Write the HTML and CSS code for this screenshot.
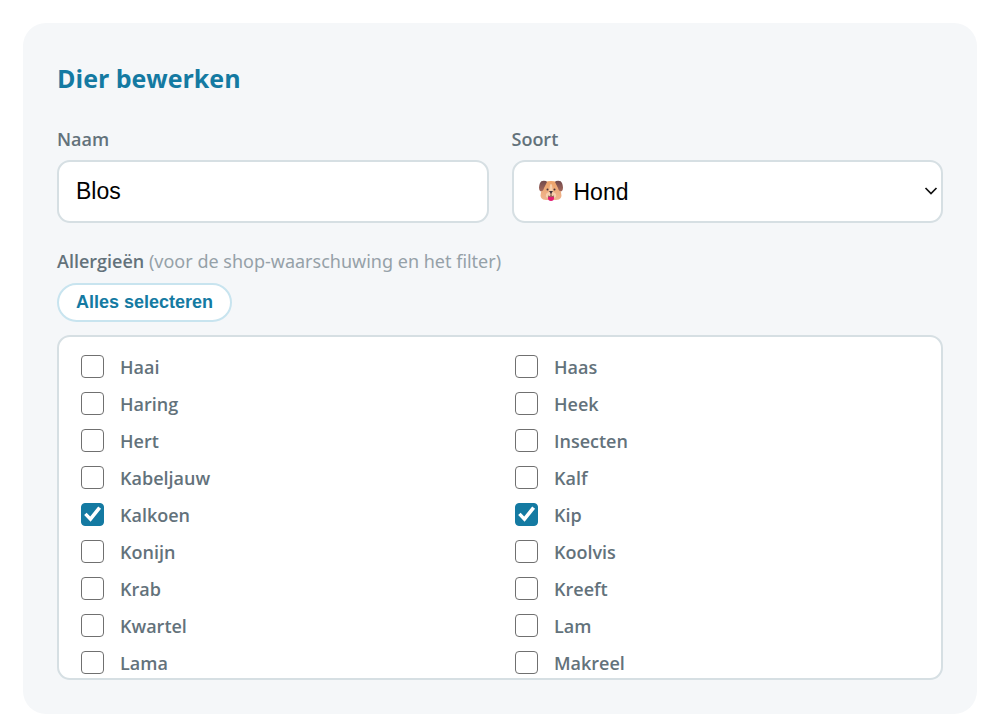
FILE: index.html
```html
<!DOCTYPE html>
<html lang="nl">
<head>
<meta charset="utf-8">
<meta name="viewport" content="width=device-width, initial-scale=1">
<title>Dier bewerken</title>
<link rel="stylesheet" href="styles.css">
</head>
<body>
<form class="card">
  <h1 class="title">Dier bewerken</h1>
  <div class="fields">
    <div class="field">
      <label class="label" for="naam">Naam</label>
      <input class="control" id="naam" type="text" value="Blos">
    </div>
    <div class="field">
      <label class="label" for="soort">Soort</label>
      <div class="select-wrap">
        <select class="control select" id="soort"><option>Hond</option></select>
        <svg class="dog" viewBox="0 0 24 24" aria-hidden="true">
          <defs>
            <linearGradient id="ear" x1="0" y1="0" x2="0" y2="1"><stop offset="0" stop-color="#70494c"/><stop offset="1" stop-color="#a4685c"/></linearGradient>
            <linearGradient id="face" x1="0" y1="0" x2="0" y2="1"><stop offset="0" stop-color="#eda268"/><stop offset="1" stop-color="#efb590"/></linearGradient>
          </defs>
          <path d="M6 2Q12 0 18 2L22 12Q24 20 17 20H7Q0 20 2 12Z" fill="url(#face)"/>
          <path d="M7 1Q2 0 1 3Q-1 8 1 11Q4 12 5 8L8 2Z" fill="url(#ear)"/>
          <path d="M17 1Q22 0 23 3Q25 8 23 11Q20 12 19 8L16 2Z" fill="url(#ear)"/>
          <path d="M11 5Q12 3 13 5L14 12Q18 13 17 17Q12 20 7 17Q6 13 10 12Z" fill="#f7cfac"/>
          <path d="M9 17Q12 16 15 17V18Q15 21 12 21Q9 21 9 18Z" fill="#e21b73"/>
          <path d="M9 16Q10 17 12 16Q14 17 15 16M12 13V16" fill="none" stroke="#7b4b42"/>
          <path d="M10 11H14L12 14Z" fill="#3f3038"/>
          <circle cx="8.500" cy="9.500" r="1" fill="#473239"/>
          <circle cx="15.500" cy="9.500" r="1" fill="#473239"/>
        </svg>
        <svg class="chevron" viewBox="0 0 14 10" aria-hidden="true"><path d="M1.500 2L7 7.500L12.500 2" fill="none" stroke="#111" stroke-width="1.700"/></svg>
      </div>
    </div>
  </div>
  <fieldset class="allergies">
    <legend class="label">Allergieën <span class="hint">(voor de shop-waarschuwing en het filter)</span></legend>
    <button class="pill" type="button">Alles selecteren</button>
    <div class="list">
      <label class="item"><input class="check" type="checkbox">Haai</label>
      <label class="item"><input class="check" type="checkbox">Haas</label>
      <label class="item"><input class="check" type="checkbox">Haring</label>
      <label class="item"><input class="check" type="checkbox">Heek</label>
      <label class="item"><input class="check" type="checkbox">Hert</label>
      <label class="item"><input class="check" type="checkbox">Insecten</label>
      <label class="item"><input class="check" type="checkbox">Kabeljauw</label>
      <label class="item"><input class="check" type="checkbox">Kalf</label>
      <label class="item"><input class="check" type="checkbox" checked>Kalkoen</label>
      <label class="item"><input class="check" type="checkbox" checked>Kip</label>
      <label class="item"><input class="check" type="checkbox">Konijn</label>
      <label class="item"><input class="check" type="checkbox">Koolvis</label>
      <label class="item"><input class="check" type="checkbox">Krab</label>
      <label class="item"><input class="check" type="checkbox">Kreeft</label>
      <label class="item"><input class="check" type="checkbox">Kwartel</label>
      <label class="item"><input class="check" type="checkbox">Lam</label>
      <label class="item"><input class="check" type="checkbox">Lama</label>
      <label class="item"><input class="check" type="checkbox">Makreel</label>
    </div>
  </fieldset>
</form>
</body>
</html>
```
FILE: styles.css
```css
* {
  box-sizing: border-box;
}

body {
  margin: 0;
  background: #fff;
  color: #63727b;
  font-family: "Segoe UI", "Open Sans", "Noto Sans", sans-serif;
  font-size: 18px;
}

.card {
  margin: 23px 23px 7px;
  padding: 34px;
  border-radius: 23px;
  background: #f5f7f9;
}

.title {
  margin: 0 0 27px;
  color: #147aa2;
  font-size: 25px;
  font-weight: 700;
  line-height: 42px;
}

.fields {
  display: grid;
  grid-template-columns: 1fr 1fr;
  gap: 23px;
  margin-bottom: 25px;
}

.label {
  display: block;
  padding: 0;
  font-weight: 600;
  line-height: 26px;
}

.field .label {
  margin-bottom: 8px;
}

.control {
  display: block;
  width: 100%;
  height: 63px;
  padding: 0 17px;
  border: 2px solid #d6dfe3;
  border-radius: 13px;
  background: #fff;
  color: #000;
  font-family: "Liberation Sans", Arial, sans-serif;
  font-size: 23px;
}

.select-wrap {
  position: relative;
}

.select {
  appearance: none;
  padding-left: 60px;
}

.dog {
  position: absolute;
  top: 20px;
  left: 27px;
  width: 24px;
  height: 24px;
  pointer-events: none;
}

.chevron {
  position: absolute;
  top: 26px;
  right: 5px;
  width: 14px;
  height: 10px;
  pointer-events: none;
}

.allergies {
  min-width: 0;
  margin: 0;
  padding: 0;
  border: 0;
}

.hint {
  color: #95a1a8;
  font-family: "Segoe UI", "Noto Sans", sans-serif;
  font-weight: 400;
}

.pill {
  display: block;
  height: 39px;
  margin: 9px 0 13px;
  padding: 0 17px;
  border: 2px solid #c8e4ef;
  border-radius: 20px;
  background: #fff;
  color: #147aa2;
  font-family: "Liberation Sans", Arial, sans-serif;
  font-size: 18px;
  font-weight: 700;
}

.list {
  display: grid;
  grid-template-columns: 1fr 1fr;
  gap: 0 30px;
  max-height: 345px;
  padding: 11px 22px 0;
  border: 2px solid #d6dfe3;
  border-radius: 13px;
  background: #fff;
  overflow: hidden;
}

.item {
  display: flex;
  align-items: center;
  gap: 16px;
  height: 37px;
  font-weight: 600;
}

.check {
  appearance: none;
  position: relative;
  flex: none;
  width: 23px;
  height: 23px;
  margin: 0;
  border: 1px solid #707070;
  border-radius: 4px;
  background: #fff;
}

.check:checked {
  border-color: #147aa2;
  background: #147aa2;
}

.check:checked::after {
  content: "";
  position: absolute;
  inset: 1px;
  background: #fff;
  clip-path: polygon(6% 53%, 19% 41%, 38% 60%, 80% 8%, 95% 20%, 40% 88%);
}
```
